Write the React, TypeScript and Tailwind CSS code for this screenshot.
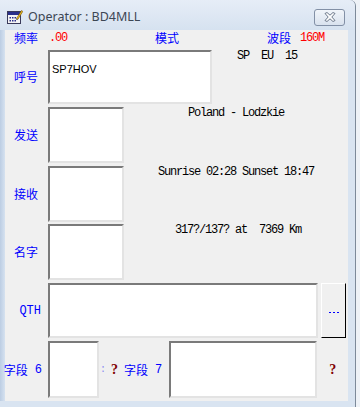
// 操作员窗口 — 呼号/QTH 录入面板（仿 Win7 Basic 对话框）

const cjk = { fontFamily: '"Noto Sans CJK SC", "Liberation Sans", sans-serif' };
const mono = { fontFamily: '"Liberation Mono", "Noto Sans CJK SC", monospace' };
const serif = { fontFamily: '"Liberation Serif", serif' };

function Box({ className = "", children }: { className?: string; children?: React.ReactNode }) {
  // 凹陷输入框：上/左深，下/右浅
  return (
    <div
      className={`bg-white border-2 border-t-[#7a7a7a] border-l-[#7a7a7a] border-b-[#e3e3e3] border-r-[#e3e3e3] ${className}`}
    >
      {children}
    </div>
  );
}

function AppIcon() {
  return (
    <svg width="16" height="16" viewBox="0 0 16 16">
      <rect x="0.5" y="2.5" width="13" height="12" fill="#f4f4f4" stroke="#3a3a5a" />
      <rect x="1" y="3" width="12" height="3" fill="#2a2f8a" />
      <g fill="#2a2f8a">
        <rect x="2.5" y="8" width="1.5" height="1.5" />
        <rect x="5" y="8" width="1.5" height="1.5" />
        <rect x="7.5" y="8" width="1.5" height="1.5" />
        <rect x="2.5" y="11" width="1.5" height="1.5" />
        <rect x="5" y="11" width="1.5" height="1.5" />
        <rect x="7.5" y="11" width="1.5" height="1.5" />
      </g>
      <path d="M9.5 9.5 L14.5 1.5 L15.8 2.4 L10.8 10.4 Z" fill="#f2c21a" stroke="#6a4a10" strokeWidth="0.6" />
      <path d="M9.5 9.5 L10.8 10.4 L9.3 11 Z" fill="#333" />
    </svg>
  );
}

function CloseGlyph() {
  return (
    <svg width="12" height="10" viewBox="0 0 12 10">
      <path
        d="M1 1.5 L3 0.5 L6 3.2 L9 0.5 L11 1.5 L7.8 5 L11 8.5 L9 9.5 L6 6.8 L3 9.5 L1 8.5 L4.2 5 Z"
        fill="#ffffff"
        stroke="#5c6a7e"
        strokeWidth="0.9"
        strokeLinejoin="round"
      />
    </svg>
  );
}

function Label({ text, pr = "pr-[10px]", latin = false }: { text: string; pr?: string; latin?: boolean }) {
  return (
    <div
      className={`w-[43px] shrink-0 text-right text-[12px] leading-[12px] text-[#0000ff] ${pr}`}
      style={latin ? mono : cjk}
    >
      {text}
    </div>
  );
}

function Info({ text }: { text: string }) {
  return (
    <div className="flex-1 self-start text-center text-[12px] leading-[12px] tracking-[-1.2px] text-black whitespace-pre" style={mono}>
      {text}
    </div>
  );
}

function Field({ n }: { n: string }) {
  return (
    <span className="flex shrink-0 items-center whitespace-nowrap text-[12px] leading-[12px] text-[#0000ff]">
      <span style={cjk}>字段</span>
      <span className="ml-[7px]" style={mono}>{n}</span>
    </span>
  );
}

export default function App() {
  return (
    <div className="w-[360px] h-[407px] bg-[#eef2f7] overflow-hidden">
      <div className="w-[356px] h-[407px] flex flex-col bg-[#d9e4f1] border-r border-[#7d8a9a] rounded-tr-[6px]">
        {/* 标题栏 */}
        <div className="h-[30px] shrink-0 flex items-center bg-linear-to-b from-[#e6edf7] to-[#d6e2f0] rounded-tr-[6px]">
          <div className="ml-[7px] mt-[4px]">
            <AppIcon />
          </div>
          <span className="ml-[5px] mt-[5px] text-[12.5px] text-[#3c4654]" style={{ fontFamily: '"Noto Sans", sans-serif' }}>
            Operator : BD4MLL
          </span>
          <div className="ml-auto mr-[10px] mt-[4px] w-[31px] h-[17px] rounded-[3px] border border-[#8290a6] bg-linear-to-b from-[#f1f5fa] to-[#d9e2ee] flex items-center justify-center">
            <CloseGlyph />
          </div>
        </div>

        <div className="flex flex-1">
          <div className="w-[5px] bg-linear-to-r from-[#bccde3] to-[#d6e2f0]" />
          {/* 客户区 */}
          <div className="w-[343px] h-[371px] bg-[#f0f0f0] flex flex-col">
            {/* 频率 / 模式 / 波段 */}
            <div className="h-[20px] flex items-start pt-[2px]">
              <Label text="频率" />
              <span className="ml-[1px] text-[12px] leading-[12px] tracking-[-1.2px] text-[#ff0000]" style={mono}>.00</span>
              <span className="ml-[88px] text-[12px] leading-[12px] text-[#0000ff]" style={cjk}>模式</span>
              <span className="ml-[88px] text-[12px] leading-[12px] text-[#0000ff]" style={cjk}>波段</span>
              <span className="ml-[9px] text-[12px] leading-[12px] tracking-[-1.2px] text-[#ff0000]" style={mono}>160M</span>
            </div>

            {/* 呼号 */}
            <div className="h-[54px] flex items-center">
              <Label text="呼号" />
              <Box className="w-[164px] h-full px-[2px] pt-[3px]">
                <span className="text-[11px] leading-[13px] text-black" style={{ fontFamily: '"Liberation Sans", sans-serif' }}>
                  SP7HOV
                </span>
              </Box>
              <div className="self-start pl-[25px] text-[12px] leading-[12px] tracking-[-1.2px] text-black whitespace-pre" style={mono}>
                SP  EU  15
              </div>
            </div>

            <div className="mt-[3px] h-[56px] flex items-center">
              <Label text="发送" />
              <Box className="w-[76px] h-full" />
              <Info text="Poland - Lodzkie" />
            </div>

            <div className="mt-[3px] h-[56px] flex items-center">
              <Label text="接收" />
              <Box className="w-[76px] h-full" />
              <Info text="Sunrise 02:28 Sunset 18:47" />
            </div>

            <div className="mt-[2px] h-[56px] flex items-center">
              <Label text="名字" />
              <Box className="w-[76px] h-full" />
              <div className="flex-1 self-start pl-[4px]">
                <Info text="317?/137? at  7369 Km" />
              </div>
            </div>

            {/* QTH */}
            <div className="mt-[3px] h-[55px] flex items-center">
              <Label text="QTH" pr="pr-[7px]" latin />
              <Box className="w-[270px] h-full" />
              <button className="ml-[3px] w-[25px] h-full bg-[#f0f0f0] border border-t-white border-l-white border-r-black border-b-black flex items-center justify-center pt-[3px]">
                <span className="flex gap-[2px]">
                  <span className="w-[2px] h-[1px] bg-[#0000ff]" />
                  <span className="w-[2px] h-[1px] bg-[#0000ff]" />
                  <span className="w-[2px] h-[1px] bg-[#0000ff]" />
                </span>
              </button>
            </div>

            {/* 字段 6 / 字段 7 */}
            <div className="mt-[3px] h-[57px] flex items-center">
              <div className="w-[43px] shrink-0 flex justify-end pr-[6px]">
                <Field n="6" />
              </div>
              <Box className="w-[51px] h-full" />
              <span className="ml-[1px] text-[10px] leading-[12px] text-[#8a8af0]" style={mono}>:</span>
              <span className="ml-[5px] text-[14px] leading-[14px] font-bold text-[#800000]" style={serif}>?</span>
              <span className="ml-[6px]">
                <Field n="7" />
              </span>
              <Box className="ml-[7px] w-[148px] h-full" />
              <span className="ml-[12px] text-[14px] leading-[14px] font-bold text-[#800000]" style={serif}>?</span>
            </div>
          </div>
        </div>
        <div className="h-[6px] shrink-0" />
      </div>
    </div>
  );
}
